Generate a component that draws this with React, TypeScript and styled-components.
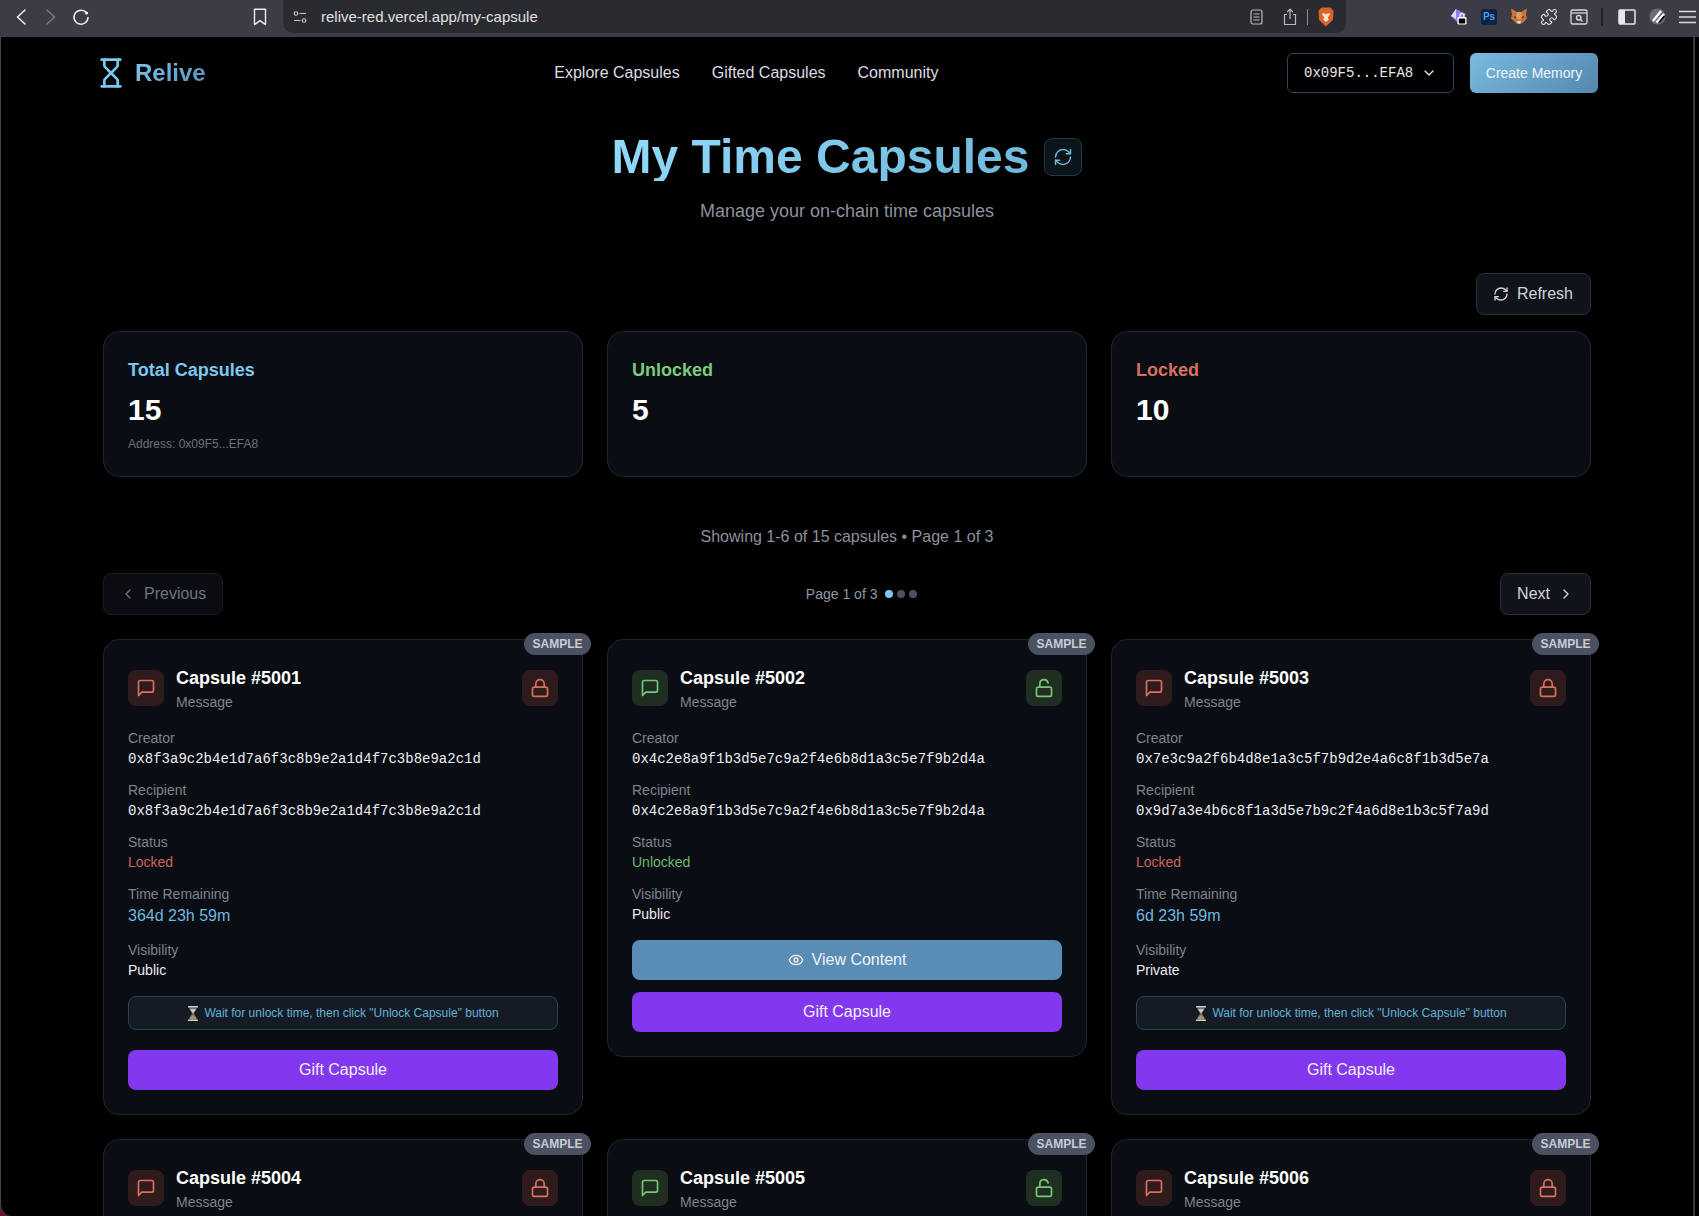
import React from 'react';
import styled, { createGlobalStyle } from 'styled-components';
import {
  ChevronDown,
  ChevronLeft,
  ChevronRight,
  Eye,
  Hourglass,
  Lock,
  LockOpen,
  Puzzle,
  RefreshCw,
} from 'lucide-react';

const GlobalStyle = createGlobalStyle`
  html, body {
    margin: 0;
    background: #000;
    font-family: "Liberation Sans", Arial, sans-serif;
  }
  * { box-sizing: border-box; }
`;

const Shell = styled.div`
  width: 1699px;
  height: 1216px;
  overflow: hidden;
  display: flex;
  flex-direction: column;
  background: #5a1c2b;
`;

const Toolbar = styled.div`
  flex: 0 0 37px;
  display: flex;
  overflow: hidden;
  background: #3b3c45;
`;

const LeftTools = styled.div`
  flex: 0 0 283px;
  padding: 0 8px 4px 6px;
  display: flex;
  align-items: center;
`;

const ToolSlot = styled.div<{ $push?: boolean; $after?: number }>`
  width: 30px;
  height: 30px;
  display: flex;
  align-items: center;
  justify-content: center;
  flex: none;
  margin-left: ${(p) => (p.$push ? 'auto' : '0')};
  margin-right: ${(p) => p.$after || 0}px;
`;

const AddressBar = styled.div`
  flex: 0 0 1063px;
  height: 33px;
  padding: 0 12px 0 10px;
  display: flex;
  align-items: center;
  background: #2a2b31;
  border-radius: 0 0 10px 10px;
`;

const UrlText = styled.span`
  margin-left: 14px;
  font-size: 15px;
  color: #e0e0e2;
`;

const AddressEnd = styled.div`
  margin-left: auto;
  display: flex;
  align-items: center;
`;

const ToolDivider = styled.div`
  width: 2px;
  height: 18px;
  margin: 0 9px 0 7px;
  background: #1f2025;
  flex: none;
`;

const ThinDivider = styled.div`
  width: 1px;
  height: 16px;
  margin: 0 10px 0 2px;
  background: #8a8b90;
`;

const RightTools = styled.div`
  flex: none;
  padding: 0 0 4px 98px;
  display: flex;
  align-items: center;
`;

const PsIcon = styled.div`
  width: 16px;
  height: 16px;
  border-radius: 2px;
  background: #0f2344;
  color: #4d9df0;
  font-size: 10px;
  font-weight: 700;
  display: flex;
  align-items: center;
  justify-content: center;
`;

const Viewport = styled.div`
  flex: 1;
  min-height: 0;
  display: flex;
`;

const Page = styled.div`
  width: 1693px;
  background: #000;
  border-left: 1px solid #45464a;
  border-bottom-left-radius: 12px;
`;

const ScrollEdge = styled.div`
  flex: 1;
  background: #000;
  border-left: 2px solid #3a3a3d;
`;

const Nav = styled.nav`
  height: 72px;
  padding: 0 95px 0 94px;
  display: flex;
  align-items: center;
  justify-content: space-between;
`;

const Brand = styled.div`
  display: flex;
  align-items: center;
  gap: 8px;
  color: #7cc7ec;
`;

const BrandName = styled.span`
  font-size: 24px;
  font-weight: 700;
  background: linear-gradient(135deg, #7cc8ee, #5a8fb8);
  -webkit-background-clip: text;
  background-clip: text;
  color: transparent;
`;

const NavLinks = styled.div`
  display: flex;
  gap: 32px;
`;

const NavLink = styled.a`
  font-size: 16px;
  color: #dcdee2;
`;

const NavActions = styled.div`
  display: flex;
  gap: 16px;
`;

const WalletButton = styled.button`
  width: 167px;
  height: 40px;
  padding: 0 16px;
  display: flex;
  align-items: center;
  justify-content: space-between;
  background: #000;
  border: 1px solid #27475a;
  border-radius: 6px;
  color: #e8e8e8;
  font-family: "Liberation Mono", monospace;
  font-size: 14px;
`;

const CreateButton = styled.button`
  width: 128px;
  height: 40px;
  border: 0;
  border-radius: 6px;
  background: linear-gradient(135deg, #7ab9de, #5388af);
  color: #f2f6f9;
  font-family: inherit;
  font-size: 14px;
`;

const Container = styled.main`
  width: 1488px;
  margin: 0 auto;
`;

const TitleRow = styled.div`
  margin-top: 24px;
  display: flex;
  align-items: center;
  justify-content: center;
  gap: 15px;
`;

const Title = styled.h1`
  margin: 0;
  font-size: 48px;
  line-height: 48px;
  font-weight: 700;
  background: linear-gradient(135deg, #93dbfb, #6fb7db);
  -webkit-background-clip: text;
  background-clip: text;
  color: transparent;
`;

const TitleIconButton = styled.button`
  width: 38px;
  height: 38px;
  padding: 0;
  display: flex;
  align-items: center;
  justify-content: center;
  background: #0a1419;
  border: 1px solid #1e3a49;
  border-radius: 8px;
  color: #6fb6d9;
`;

const Subtitle = styled.p`
  margin: 16px 0 0;
  text-align: center;
  font-size: 18px;
  line-height: 28px;
  color: #8d919b;
`;

const RefreshRow = styled.div`
  margin-top: 48px;
  display: flex;
  justify-content: flex-end;
`;

const OutlineButton = styled.button<{ $muted?: boolean }>`
  height: 42px;
  padding: 0 16px;
  display: flex;
  align-items: center;
  gap: 8px;
  background: ${(p) => (p.$muted ? '#0a0c11' : '#10131a')};
  border: 1px solid ${(p) => (p.$muted ? '#191c23' : '#2a2e38')};
  border-radius: 8px;
  color: ${(p) => (p.$muted ? '#6f7480' : '#d3d5da')};
  font-family: inherit;
  font-size: 16px;
`;

const RefreshButton = styled(OutlineButton)`
  padding-right: 17px;
`;

const StatsGrid = styled.section`
  margin-top: 16px;
  display: grid;
  grid-template-columns: repeat(3, 1fr);
  gap: 24px;
`;

const StatCard = styled.div`
  height: 146px;
  padding: 24px;
  background: #0a0d14;
  border: 1px solid #1f242e;
  border-radius: 16px;
`;

const StatLabel = styled.div<{ $color: string }>`
  font-size: 18px;
  line-height: 28px;
  font-weight: 700;
  color: ${(p) => p.$color};
`;

const StatValue = styled.div`
  margin-top: 8px;
  font-size: 30px;
  line-height: 36px;
  font-weight: 700;
  color: #fff;
`;

const StatNote = styled.div`
  margin-top: 8px;
  font-size: 12px;
  line-height: 16px;
  color: #6b707b;
`;

const Showing = styled.div`
  margin-top: 48px;
  text-align: center;
  font-size: 16px;
  line-height: 24px;
  color: #8d919b;
`;

const Pagination = styled.div`
  margin-top: 24px;
  display: flex;
  align-items: center;
  justify-content: space-between;
`;

const PageStatus = styled.div`
  display: flex;
  align-items: center;
  gap: 8px;
  font-size: 14px;
  color: #9397a1;
`;

const Dots = styled.div`
  display: flex;
  gap: 4px;
`;

const Dot = styled.span<{ $active?: boolean }>`
  width: 8px;
  height: 8px;
  border-radius: 50%;
  background: ${(p) => (p.$active ? '#7cc8ee' : '#4b5160')};
`;

const CapsuleGrid = styled.section`
  margin-top: 24px;
  display: grid;
  grid-template-columns: repeat(3, 1fr);
  gap: 24px;
  align-items: start;
`;

const Card = styled.article`
  position: relative;
  padding: 24px;
  background: #0a0d14;
  border: 1px solid #1f242e;
  border-radius: 16px;
`;

const SampleBadge = styled.span`
  position: absolute;
  top: -7px;
  right: -9px;
  width: 67px;
  height: 22px;
  display: flex;
  align-items: center;
  justify-content: center;
  background: #4b5160;
  border-radius: 999px;
  color: #c9ccd4;
  font-size: 12px;
  font-weight: 700;
`;

const CardHeader = styled.header`
  display: flex;
  align-items: center;
  gap: 12px;
  margin-bottom: 16px;
`;

const IconBox = styled.div<{ $open: boolean }>`
  width: 36px;
  height: 36px;
  flex: none;
  display: flex;
  align-items: center;
  justify-content: center;
  border-radius: 8px;
  background: ${(p) => (p.$open ? '#1f2e21' : '#2f1b1c')};
  color: ${(p) => (p.$open ? '#74c774' : '#d8705f')};
`;

const CardHeading = styled.div`
  flex: 1;
`;

const CardTitle = styled.h3`
  margin: 0;
  font-size: 18px;
  line-height: 28px;
  font-weight: 700;
  color: #fff;
`;

const CardKind = styled.div`
  font-size: 14px;
  line-height: 20px;
  color: #7f838d;
`;

const Fields = styled.div`
  display: flex;
  flex-direction: column;
  gap: 12px;
`;

const FieldLabel = styled.div`
  font-size: 14px;
  line-height: 20px;
  color: #7f838d;
`;

const Address = styled.div`
  height: 20px;
  font-family: "Liberation Mono", monospace;
  font-size: 14px;
  line-height: 22px;
  color: #eceef0;
`;

const FieldValue = styled.div<{ $color?: string; $large?: boolean }>`
  font-size: ${(p) => (p.$large ? '16px' : '14px')};
  line-height: ${(p) => (p.$large ? '24px' : '20px')};
  color: ${(p) => p.$color || '#eceef0'};
`;

const Notice = styled.div`
  height: 34px;
  margin-top: 16px;
  display: flex;
  align-items: center;
  justify-content: center;
  gap: 5px;
  background: #141b24;
  border: 1px solid #294456;
  border-radius: 8px;
  color: #67b0d5;
  font-size: 12px;
`;

const Actions = styled.div<{ $gapTop: number }>`
  margin-top: ${(p) => p.$gapTop}px;
  display: flex;
  flex-direction: column;
  gap: 12px;
`;

const ActionButton = styled.button<{ $color: string }>`
  height: 40px;
  display: flex;
  align-items: center;
  justify-content: center;
  gap: 8px;
  border: 0;
  border-radius: 8px;
  background: ${(p) => p.$color};
  color: #f3f0fb;
  font-family: inherit;
  font-size: 16px;
`;

const MessageIcon = () => (
  <svg width="20" height="20" viewBox="0 0 24 24" fill="none" stroke="currentColor" strokeWidth="2" strokeLinecap="round" strokeLinejoin="round">
    <path d="M21 15a2 2 0 0 1-2 2H7l-4 4V5a2 2 0 0 1 2-2h14a2 2 0 0 1 2 2z" />
  </svg>
);

const ReloadIcon = () => (
  <svg width="18" height="18" viewBox="0 0 18 18" fill="none" stroke="#ededef" strokeWidth="1.5">
    <path d="M14.6 5A7 7 0 1 0 16 9.5" strokeLinecap="round" />
    <circle cx="14.6" cy="5" r="1.6" fill="#ededef" stroke="none" />
  </svg>
);

const BackIcon = ({ color }: { color: string }) => (
  <svg width="12" height="18" viewBox="0 0 12 18" fill="none" stroke={color} strokeWidth="1.6" strokeLinecap="round" strokeLinejoin="round">
    <path d="M10 2 2.5 9l7.5 7" />
  </svg>
);

const ForwardIcon = ({ color }: { color: string }) => (
  <svg width="12" height="18" viewBox="0 0 12 18" fill="none" stroke={color} strokeWidth="1.6" strokeLinecap="round" strokeLinejoin="round">
    <path d="M2 2l7.5 7L2 16" />
  </svg>
);

const BookmarkIcon = () => (
  <svg width="14" height="18" viewBox="0 0 14 18" fill="none" stroke="#ededef" strokeWidth="1.4" strokeLinejoin="round">
    <path d="M1.5 1.2h11v15.4L7 12.6l-5.5 4z" />
  </svg>
);

const SiteSettingsIcon = () => (
  <svg width="14" height="14" viewBox="0 0 14 14" fill="none" stroke="#c9cace" strokeWidth="1.1">
    <circle cx="3" cy="3.5" r="1.8" />
    <path d="M6.5 3.5H13M1 10.5h6.5" />
    <circle cx="11" cy="10.5" r="1.8" />
  </svg>
);

const ReaderIcon = () => (
  <svg width="13" height="16" viewBox="0 0 13 16" fill="none" stroke="#b9babf" strokeWidth="1.2">
    <rect x="1" y="1" width="11" height="14" rx="2" />
    <path d="M3.5 5h6M3.5 8h6M3.5 11h6" />
  </svg>
);

const ShareIcon = () => (
  <svg width="14" height="18" viewBox="0 0 14 18" fill="none" stroke="#b9babf" strokeWidth="1.2" strokeLinejoin="round">
    <path d="M4 6.5H1.5v10h11v-10H10" />
    <path d="M7 11V1.5M4.2 4 7 1.2 9.8 4" />
  </svg>
);

const BraveIcon = () => (
  <svg width="16" height="20" viewBox="0 0 16 20">
    <path d="M3.5 0.5h9L15.5 4l-.6 9L8 19.5 1.1 13 .5 4z" fill="#d9642a" />
    <path d="M5 6l3 1.2L11 6l1 1.5-2.2 3 1 2L8 15l-2.8-2.5 1-2L4 7.5z" fill="#f6e3d6" />
  </svg>
);

const WalletExtIcon = () => (
  <svg width="18" height="18" viewBox="0 0 18 18">
    <path d="M6 1 16 6 9 16 1 8z" fill="#9a7be8" />
    <path d="M6 1 1 8l5 3z" fill="#e4d9fb" />
    <rect x="7.5" y="9" width="9" height="7.5" rx="1.2" fill="#fff" />
    <rect x="8.8" y="10.5" width="6.4" height="5" rx="0.8" fill="#000" />
    <path d="M10 9.5V7.6a2 2 0 0 1 4 0v1.9" fill="none" stroke="#fff" strokeWidth="1.2" />
  </svg>
);

const FoxIcon = () => (
  <svg width="18" height="17" viewBox="0 0 18 17">
    <path d="M1 0.5 7 4h4l6-3.5-1 6 1 4-3 3-3 2.5H7L4 13l-3-2.5 1-4z" fill="#c9743c" />
    <path d="M7 4h4l1 5-3 3-3-3z" fill="#e09a66" />
    <path d="M4 8l2.5 1L5 10.5zM14 8l-2.5 1 1.5 1.5z" fill="#3a2a20" />
    <path d="M7 13h4l-1 2.5H8z" fill="#e8dcd0" />
  </svg>
);

const WindowSearchIcon = () => (
  <svg width="18" height="16" viewBox="0 0 18 16" fill="none" stroke="#d8d8da" strokeWidth="1.3">
    <rect x="1" y="1" width="16" height="14" rx="1.5" />
    <path d="M1 4h16" />
    <circle cx="8.7" cy="8.8" r="2.2" strokeWidth="1.5" />
    <path d="m10.5 10.5 2 2" strokeWidth="1.5" />
  </svg>
);

const SidebarIcon = () => (
  <svg width="18" height="16" viewBox="0 0 18 16">
    <rect x="1" y="1" width="16" height="14" rx="1" fill="none" stroke="#e8e8ea" strokeWidth="1.5" />
    <rect x="1" y="1" width="6" height="14" fill="#e8e8ea" />
  </svg>
);

const PenIcon = () => (
  <svg width="17" height="17" viewBox="0 0 17 17">
    <circle cx="8.5" cy="8.5" r="8" fill="#6b6c74" />
    <path d="M4 13 12 3M7.5 14.5 15 6" stroke="#fff" strokeWidth="2.4" />
    <path d="M10 14.5 15.5 8" stroke="#000" strokeWidth="1.6" />
  </svg>
);

const MenuIcon = () => (
  <svg width="17" height="14" viewBox="0 0 17 14" stroke="#dcdcde" strokeWidth="1.5">
    <path d="M0 1.5h17M0 7h17M0 12.5h17" />
  </svg>
);

const SandGlassGlyph = () => (
  <svg width="12" height="15" viewBox="0 0 12 15">
    <path d="M2.2 1.6h7.6c0 3-2.6 4.4-2.8 5.9.2 1.5 2.8 2.9 2.8 5.9H2.2c0-3 2.6-4.4 2.8-5.9-.2-1.5-2.8-2.9-2.8-5.9z" fill="#6d7278" />
    <path d="M3.2 3.2h5.6L6 7.2z" fill="#d9cdb8" />
    <path d="M3 12.9c.3-1.8 2-2.4 3-3.8 1 1.4 2.7 2 3 3.8z" fill="#b98f58" />
    <rect x="1" y="0" width="10" height="1.6" rx="0.5" fill="#d5cfc4" />
    <rect x="1" y="13.4" width="10" height="1.6" rx="0.5" fill="#d5cfc4" />
  </svg>
);

interface CapsuleData {
  id: number;
  creator: string;
  recipient: string;
  open: boolean;
  remaining?: string;
  visibility: string;
}

const capsules: CapsuleData[] = [
  {
    id: 5001,
    creator: '0x8f3a9c2b4e1d7a6f3c8b9e2a1d4f7c3b8e9a2c1d',
    recipient: '0x8f3a9c2b4e1d7a6f3c8b9e2a1d4f7c3b8e9a2c1d',
    open: false,
    remaining: '364d 23h 59m',
    visibility: 'Public',
  },
  {
    id: 5002,
    creator: '0x4c2e8a9f1b3d5e7c9a2f4e6b8d1a3c5e7f9b2d4a',
    recipient: '0x4c2e8a9f1b3d5e7c9a2f4e6b8d1a3c5e7f9b2d4a',
    open: true,
    visibility: 'Public',
  },
  {
    id: 5003,
    creator: '0x7e3c9a2f6b4d8e1a3c5f7b9d2e4a6c8f1b3d5e7a',
    recipient: '0x9d7a3e4b6c8f1a3d5e7b9c2f4a6d8e1b3c5f7a9d',
    open: false,
    remaining: '6d 23h 59m',
    visibility: 'Private',
  },
  {
    id: 5004,
    creator: '0x8f3a9c2b4e1d7a6f3c8b9e2a1d4f7c3b8e9a2c1d',
    recipient: '0x8f3a9c2b4e1d7a6f3c8b9e2a1d4f7c3b8e9a2c1d',
    open: false,
    remaining: '29d 23h 59m',
    visibility: 'Public',
  },
  {
    id: 5005,
    creator: '0x4c2e8a9f1b3d5e7c9a2f4e6b8d1a3c5e7f9b2d4a',
    recipient: '0x4c2e8a9f1b3d5e7c9a2f4e6b8d1a3c5e7f9b2d4a',
    open: true,
    visibility: 'Public',
  },
  {
    id: 5006,
    creator: '0x7e3c9a2f6b4d8e1a3c5f7b9d2e4a6c8f1b3d5e7a',
    recipient: '0x9d7a3e4b6c8f1a3d5e7b9c2f4a6d8e1b3c5f7a9d',
    open: false,
    remaining: '89d 23h 59m',
    visibility: 'Private',
  },
];

const CapsuleCard: React.FC<{ capsule: CapsuleData }> = ({ capsule }) => {
  const { id, creator, recipient, open, remaining, visibility } = capsule;

  return (
    <Card>
      <SampleBadge>SAMPLE</SampleBadge>
      <CardHeader>
        <IconBox $open={open}>
          <MessageIcon />
        </IconBox>
        <CardHeading>
          <CardTitle>Capsule #{id}</CardTitle>
          <CardKind>Message</CardKind>
        </CardHeading>
        <IconBox $open={open}>{open ? <LockOpen size={20} /> : <Lock size={20} />}</IconBox>
      </CardHeader>
      <Fields>
        <div>
          <FieldLabel>Creator</FieldLabel>
          <Address>{creator}</Address>
        </div>
        <div>
          <FieldLabel>Recipient</FieldLabel>
          <Address>{recipient}</Address>
        </div>
        <div>
          <FieldLabel>Status</FieldLabel>
          <FieldValue $color={open ? '#6cbb6c' : '#c9665a'}>{open ? 'Unlocked' : 'Locked'}</FieldValue>
        </div>
        {remaining && (
          <div>
            <FieldLabel>Time Remaining</FieldLabel>
            <FieldValue $color="#6fb8de" $large>
              {remaining}
            </FieldValue>
          </div>
        )}
        <div>
          <FieldLabel>Visibility</FieldLabel>
          <FieldValue>{visibility}</FieldValue>
        </div>
      </Fields>
      {!open && (
        <Notice>
          <SandGlassGlyph />
          Wait for unlock time, then click "Unlock Capsule" button
        </Notice>
      )}
      <Actions $gapTop={open ? 16 : 20}>
        {open && (
          <ActionButton $color="#5a8db5">
            <Eye size={16} />
            View Content
          </ActionButton>
        )}
        <ActionButton $color="#8337ee">Gift Capsule</ActionButton>
      </Actions>
    </Card>
  );
};

const App: React.FC = () => (
  <>
    <GlobalStyle />
    <Shell>
      <Toolbar>
        <LeftTools>
          <ToolSlot>
            <BackIcon color="#ededef" />
          </ToolSlot>
          <ToolSlot>
            <ForwardIcon color="#77787f" />
          </ToolSlot>
          <ToolSlot>
            <ReloadIcon />
          </ToolSlot>
          <ToolSlot $push>
            <BookmarkIcon />
          </ToolSlot>
        </LeftTools>
        <AddressBar>
          <SiteSettingsIcon />
          <UrlText>relive-red.vercel.app/my-capsule</UrlText>
          <AddressEnd>
            <ToolSlot $after={4}>
              <ReaderIcon />
            </ToolSlot>
            <ToolSlot>
              <ShareIcon />
            </ToolSlot>
            <ThinDivider />
            <BraveIcon />
          </AddressEnd>
        </AddressBar>
        <RightTools>
          <ToolSlot>
            <WalletExtIcon />
          </ToolSlot>
          <ToolSlot>
            <PsIcon>Ps</PsIcon>
          </ToolSlot>
          <ToolSlot>
            <FoxIcon />
          </ToolSlot>
          <ToolSlot>
            <Puzzle size={18} color="#e4e4e6" strokeWidth={1.5} />
          </ToolSlot>
          <ToolSlot>
            <WindowSearchIcon />
          </ToolSlot>
          <ToolDivider />
          <ToolSlot>
            <SidebarIcon />
          </ToolSlot>
          <ToolSlot>
            <PenIcon />
          </ToolSlot>
          <ToolSlot>
            <MenuIcon />
          </ToolSlot>
        </RightTools>
      </Toolbar>
      <Viewport>
        <Page>
          <Nav>
            <Brand>
              <Hourglass size={32} strokeWidth={2} />
              <BrandName>Relive</BrandName>
            </Brand>
            <NavLinks>
              <NavLink>Explore Capsules</NavLink>
              <NavLink>Gifted Capsules</NavLink>
              <NavLink>Community</NavLink>
            </NavLinks>
            <NavActions>
              <WalletButton>
                0x09F5...EFA8
                <ChevronDown size={16} />
              </WalletButton>
              <CreateButton>Create Memory</CreateButton>
            </NavActions>
          </Nav>
          <Container>
            <TitleRow>
              <Title>My Time Capsules</Title>
              <TitleIconButton>
                <RefreshCw size={20} strokeWidth={1.75} />
              </TitleIconButton>
            </TitleRow>
            <Subtitle>Manage your on-chain time capsules</Subtitle>
            <RefreshRow>
              <RefreshButton>
                <RefreshCw size={16} />
                Refresh
              </RefreshButton>
            </RefreshRow>
            <StatsGrid>
              <StatCard>
                <StatLabel $color="#7cc8ee">Total Capsules</StatLabel>
                <StatValue>15</StatValue>
                <StatNote>Address: 0x09F5...EFA8</StatNote>
              </StatCard>
              <StatCard>
                <StatLabel $color="#7acb7a">Unlocked</StatLabel>
                <StatValue>5</StatValue>
              </StatCard>
              <StatCard>
                <StatLabel $color="#d8705f">Locked</StatLabel>
                <StatValue>10</StatValue>
              </StatCard>
            </StatsGrid>
            <Showing>Showing 1-6 of 15 capsules • Page 1 of 3</Showing>
            <Pagination>
              <OutlineButton $muted>
                <ChevronLeft size={16} />
                Previous
              </OutlineButton>
              <PageStatus>
                Page 1 of 3
                <Dots>
                  <Dot $active />
                  <Dot />
                  <Dot />
                </Dots>
              </PageStatus>
              <OutlineButton>
                Next
                <ChevronRight size={16} />
              </OutlineButton>
            </Pagination>
            <CapsuleGrid>
              {capsules.map((capsule) => (
                <CapsuleCard key={capsule.id} capsule={capsule} />
              ))}
            </CapsuleGrid>
          </Container>
        </Page>
        <ScrollEdge />
      </Viewport>
    </Shell>
  </>
);

export default App;
